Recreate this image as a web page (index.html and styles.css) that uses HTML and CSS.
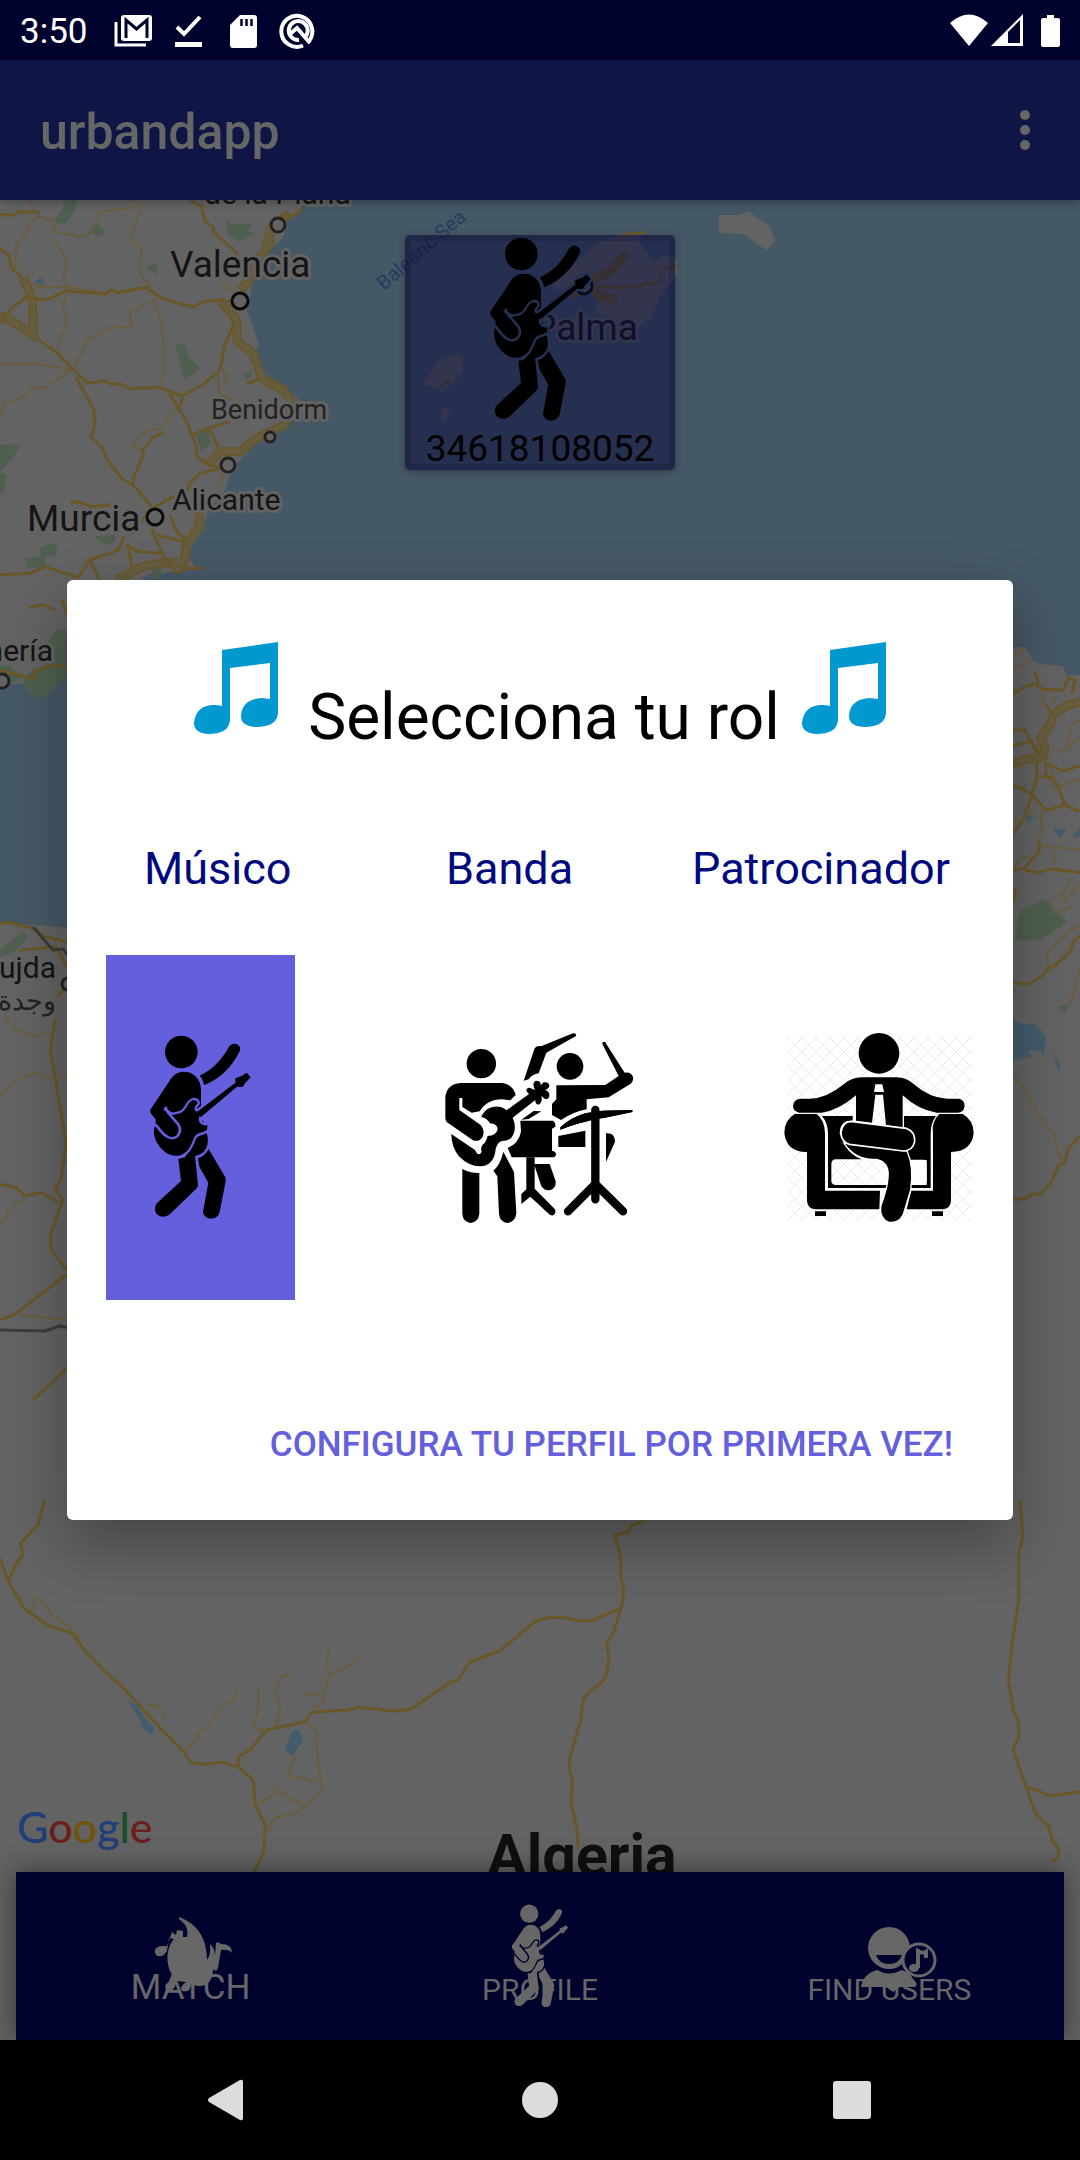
FILE: index.html
```html
<!DOCTYPE html>
<html lang="es">
<head>
<meta charset="utf-8">
<meta name="viewport" content="width=device-width, initial-scale=1">
<title>urbandapp</title>
<link rel="stylesheet" href="styles.css">
</head>
<body>
<svg class="sprite" aria-hidden="true">
  <symbol id="guitarist" viewBox="48 279 567 567">
    <g fill="currentColor">
      <circle cx="274" cy="336" r="49"/>
      <path d="M329 407C370 388 396 358 416 322Q424 308 439 312Q454 318 449 334C424 384 390 416 342 436Q340 418 329 407Z"/>
      <path d="M237 425C248 405 262 395 281 395C312 395 333 418 333 450V500L318 560L245 580L218 560L182 520Q179 514 182 508Z"/>
      <path d="M319 590L350 580C358 606 354 640 316 648L285 652Z"/>
      <path d="M265 657Q292 652 306 640L315 648L324 735Q324 742 318 747L240 822C222 838 192 830 195 802Q196 794 202 788L273 723Z"/>
      <path d="M324 655Q345 648 356 627L405 710Q409 716 407 724L389 816C382 843 343 842 339 815L355 728L328 680Z"/>
    </g>
    <path id="guitar" d="M197 553C189 570 191 588 200 607C220 640 243 650 265 647C300 640 304 607 314 590C324 574 345 580 352 567V556C342 557 332 554 328 546Q326 540 332 532L441 440L458 441L465 430L482 412L470 398L455 408L436 415V428L326 512C314 520 310 505 318 496C328 488 320 478 308 481C292 487 290 512 272 519Q258 524 245 525L225 512L197 530Z" fill="currentColor" stroke="var(--gap)" stroke-width="14" paint-order="stroke"/>
    <path d="M227 500Q228 512 236 520L264 552C277 571 266 597 243 594C226 592 216 577 196 553" fill="none" stroke="var(--gap)" stroke-width="8"/>
    <path d="M200 513L234 553L245 572" fill="none" stroke="currentColor" stroke-width="36" stroke-linecap="round" stroke-linejoin="round"/>
    <path d="M330 530Q328 548 345 553" fill="none" stroke="var(--gap)" stroke-width="7"/>
    <circle cx="338" cy="544" r="2" fill="currentColor"/>
  </symbol>
  <symbol id="notes" viewBox="0 0 84 92">
    <path fill="#0099cf" d="M28 8L84 0V70Q84 84 64 85Q47 85 47 74Q48 57 68 56L76 57V21L36 26V78Q35 92 14 92Q0 91 0 81Q2 62 22 63L28 64Z"/>
  </symbol>
</svg>

<header class="status">
  <span class="clock">3:50</span>
  <svg class="status-icons" viewBox="114 10 204 40" aria-hidden="true">
    <g fill="none" stroke="#fff" stroke-width="3"><path d="M116 21V44H146"/></g>
    <rect x="121" y="14" width="31" height="26" rx="3" fill="#fff"/>
    <path d="M126 37V19L136.500 28L147 19V37" fill="none" stroke="#00022e" stroke-width="3"/>
    <path d="M177 26L184 33L200 16" fill="none" stroke="#fff" stroke-width="4"/>
    <path d="M175 41H202V46H175Z" fill="#fff"/>
    <path d="M240 14H254Q257 14 257 17V44Q257 47 254 47H233Q230 47 230 44V24Z" fill="#fff"/>
    <path d="M241.500 18V25M246.500 18V25M251.500 18V25" stroke="#00022e" stroke-width="2.500"/>
    <g fill="none" stroke="#fff" stroke-width="4"><path d="M308 41A15.500 15.500 0 1 0 303 44.500"/><path d="M306 35A9.500 9.500 0 1 0 299 39"/><path d="M290 33L297 27L310 42"/></g>
  </svg>
  <svg class="signal-icons" viewBox="950 10 110 40" aria-hidden="true">
    <path fill="#fff" d="M969 45L950 22Q969 5 988 22ZM991 45L1023 13V45ZM1041 19Q1041 17 1043 17H1047V14H1054V17H1058Q1060 17 1060 19V44Q1060 46 1058 46H1043Q1041 46 1041 44Z"/>
    <path fill="#00022e" d="M1008 42V31L1020 19V42Z"/>
  </svg>
</header>

<div class="app">
  <div class="appbar">
    <h1>urbandapp</h1>
    <button class="more" aria-label="Más opciones"><span></span><span></span><span></span></button>
  </div>

  <main class="map">
    <svg class="map-canvas" viewBox="0 200 1080 1840" preserveAspectRatio="xMidYMin slice">
      <rect y="200" width="1080" height="1840" fill="#455865"/>
      <path fill="#636363" d="M0 200H303L300 212L288 220L283 238L262 258L252 285L247 310L259 345L254 352L268 378L288 391L304 404L285 425L270 437L255 445L238 462L230 475L225 490L208 510L203 530L192 545L189 558L195 567L203 569L150 574L110 600L90 655L70 671L52 690L44 697H34L22 683L0 686Z"/>
      <path fill="#636363" d="M0 922L70 928L400 800L1013 647H1024L1033 660L1040 664L1063 666L1067 675H1080V2040H0Z"/>
      <g fill="#636363" transform="translate(360 190) scale(.3333)">
        <path d="M1077 75H1136L1168 64L1190 83L1228 107L1246 152L1219 180L1148 131L1077 130Z"/>
        <path d="M575 284L640 225L710 160L780 132L855 126L832 150L850 172L880 217L915 192L951 212V250L930 282L900 320L872 385L835 412L760 385L710 370V325L700 300L650 290L630 335L620 300L585 300Z"/>
        <path d="M190 584L235 507L290 491L309 497V546L250 608L238 598ZM244 660L262 654L273 678L244 696Z"/>
      </g>
      <g fill="#4f5f4f" transform="translate(0 190) scale(.3333)">
        <path d="M195 32H228L230 55L200 98L180 102L160 90L182 70ZM285 95L318 124L298 140L270 128ZM680 90L705 104L755 98L745 125L770 130L715 155L680 128ZM438 230L472 220L470 255ZM524 465L555 462L566 500L600 535L555 570ZM724 552L760 542L745 572ZM585 735L620 715L634 758L605 785ZM0 765L65 763L40 800L0 845ZM76 1105L120 1100V1075L170 1056V1095L135 1098V1132H76ZM280 1040L345 1035L347 1055L318 1063ZM455 1140L485 1130L480 1165L455 1170ZM0 850H18L15 900L0 915Z"/>
        <path fill="#435c6b" d="M104 272L125 262L135 288Z"/>
      </g>
      <g fill="#4f5f4f" transform="translate(0 600) scale(.348 .51)">
        <path d="M201 60L165 58L140 80L130 130L95 135L65 160L95 190H125L201 140ZM0 130L30 128L60 155L25 165L0 150ZM0 685L70 650L78 665L40 690L0 700Z"/>
      </g>
      <g class="trunk" transform="translate(0 190) scale(.3333)">
        <path d="M870 70L810 115V160L785 195L755 225L750 270L720 300M665 335L710 390L712 455L760 490L785 565L850 600L880 640L855 705L770 745L720 785H660L625 825M0 375L55 405L110 445M70 262L98 330L100 430M600 950L598 1010L560 1060L552 1118H490L430 1130L350 1170"/>
      </g>
      <g class="trunk core" transform="translate(0 190) scale(.3333)">
        <path d="M870 70L810 115V160L785 195L755 225L750 270L720 300M665 335L710 390L712 455L760 490L785 565L850 600L880 640L855 705L770 745L720 785H660L625 825M0 375L55 405L110 445M70 262L98 330L100 430M600 950L598 1010L560 1060L552 1118H490L430 1130L350 1170"/>
      </g>
      <g class="road" transform="translate(0 190) scale(.3333)">
        <path d="M0 75H45L55 65L120 66M570 30L605 50L615 95L640 110V125L700 180L715 195M905 55L885 75L850 80M0 175L25 195L35 235L65 262M0 400L35 355L80 322L140 330L200 303L320 312L335 298L350 308L440 292L480 322L545 343L580 350L610 335L665 330L700 335M110 445L170 488L220 540L262 578H285L310 572L330 582H362L390 596L480 592L545 618L608 585L655 545L665 520L672 470L695 420L700 395M228 562L282 660L285 705L273 740L308 775L320 808L365 865L400 885L455 950M490 728L460 740L425 785L430 795L402 860L398 885M505 605L560 695L575 735L590 770V800L625 825L665 835M545 618V640L530 655M575 735L625 715L690 695M630 720L660 780M740 582L785 565M210 935L245 938L275 950L332 945M425 995L450 960L520 920L560 905L570 880L600 850L665 835M455 1015L495 1110M470 1035L555 1055M510 975L530 1025L560 1050M0 1155L90 1150L135 1130L235 1163L270 1110L355 1080L372 1040M270 1110L298 1170M383 1060L395 1130M383 1070L415 1085L490 1090M500 1110L530 1150L555 1135H610"/>
        <path class="minor" d="M90 32L105 65L120 80L85 95L80 130L50 160L45 240M120 80L155 95L165 125L240 140L270 130L290 90L305 65L415 50L425 32M420 55L410 90L390 145L425 175L418 250L450 290M160 145L200 210L190 270L200 310L190 345L200 400L170 480M0 525L100 520L215 540M215 540L140 590L95 595L65 625L15 638L0 680M225 530L262 450L325 415L395 410L390 365L475 325M465 335L485 400L495 525L478 590M100 280L120 292H210L300 305M655 545L657 610L700 630M665 530L680 560L675 590M530 655L510 680L480 715L435 725L395 770L425 780M600 950L660 880L670 835M660 270L700 305M800 120L780 190"/>
      </g>
      <g class="road" transform="translate(0 1500) scale(.6888 .3333)">
        <path d="M65 0L55 75L30 130L33 165L24 190L12 245L35 325L68 375L105 400L122 450L155 520L175 555L235 690L260 740L278 788L300 793L325 787L348 803L368 842L370 910L385 975L383 1055L369 1116M0 175L12 245M346 800V770L365 745L387 690L443 665L452 637L505 630L523 622L568 633L597 628L655 545L665 541L682 486L725 453L778 363L800 351L823 354L838 362H860L902 323M938 62L915 78L912 95L892 106L901 165V230L906 273L902 323L891 395L881 430L884 473L881 520L876 543L856 575L847 597L843 660L827 775V812L831 840L829 908L837 980L840 1060M1481 0L1485 113L1479 155V300L1470 425L1464 540L1471 630L1479 670V710L1471 750L1503 940L1522 978L1528 1020L1536 1045L1538 1070L1527 1086M1488 860L1502 868L1525 888L1568 875"/>
        <path class="minor" d="M45 335L54 292L68 320L75 345L98 377L122 425M265 760L285 720L290 695L300 683L320 625L340 600L345 572M375 563V630L368 680L382 693M420 525L407 530L398 575L406 615L402 680M478 450L473 500L480 525L470 570V605L455 630M526 465L515 490L480 525M442 592L448 577L470 590M445 665L458 692L465 845L470 865L435 935L398 955L382 1020M465 848L420 826L418 808L430 770M396 862L415 882L420 898L443 912M405 875L373 910M215 615L230 618L235 640L240 655"/>
      </g>
      <g class="road" transform="translate(0 600) scale(.348 .51)">
        <path d="M83 15L125 9L158 20M178 0L198 40M0 138L98 155L100 140L140 130L190 128M0 635L25 632L100 645L130 660L201 672M55 687L160 680L201 730M201 745L165 780M160 820L145 880L170 985L190 1065L175 1135L160 1155L180 1175L145 1245L147 1275L200 1320M0 1145L45 1152L70 1168L120 1162L165 1180M0 1412L45 1400L185 1325L201 1328M95 1568L165 1525L201 1500"/>
        <path class="minor" d="M10 815L50 845L110 855L145 845M0 970L45 945L105 925L140 938L201 933M0 1225L45 1185L70 1175M45 1400L160 1410H201"/>
      </g>
      <path class="border" d="M33 927L53 950L63 949L70 958M0 1330L45 1331L60 1326L70 1328"/>
      <g transform="translate(1000 600) scale(.3333 .51)">
        <path fill="#4f5f4f" d="M57 610L133 587L203 632L118 667L45 668ZM175 798L212 791L195 810ZM39 362L78 364L70 374L39 370ZM39 757L52 768L39 772Z"/>
        <path fill="#435c6b" d="M39 824L80 834L102 830L138 856L131 896L122 884H83L96 895L39 904ZM156 886L178 907V930ZM160 447L200 450L178 466ZM240 447L217 464H240ZM75 422L102 427L83 435Z"/>
      </g>
      <g class="trunk" transform="translate(1000 600) scale(.3333 .51)"><path d="M39 322L80 312L130 308L135 290L122 270L150 245L160 225L200 207L240 200"/></g>
      <g class="trunk core" transform="translate(1000 600) scale(.3333 .51)"><path d="M39 322L80 312L130 308L135 290L122 270L150 245L160 225L200 207L240 200"/></g>
      <g class="road" transform="translate(1000 600) scale(.3333 .51)">
        <path d="M39 185L75 170L105 165L130 175L190 177L205 152L225 158L215 185M105 140L115 165M39 255H75L110 300M39 285L95 278L120 300M138 205L155 225M110 315V345L95 385L70 430L39 458M135 320L140 345L170 360L195 402M135 320L190 335L240 325M110 345L165 348M39 362L95 380L138 413L195 402L240 415M120 475L118 490L75 525L39 530M75 530L115 535L150 527L240 535M39 595L46 565M39 750L85 754L130 735L145 720H160L210 690L220 670L240 658M240 1052L205 1075L195 1102L175 1110L155 1140L122 1165H92L85 1172L39 1176"/>
        <path class="minor" d="M39 138L100 120M39 110L60 100L75 93M125 175L130 200L145 215M170 180L160 205M240 235L215 245L200 275L205 290L170 300M200 290L240 270M155 335L165 370L240 350M125 410V450L110 480M39 440L100 412M110 480L240 490M39 530L60 505L120 500M160 490L165 520M240 555L195 590L185 580L215 545M150 590L165 615L220 600M240 635L190 660L140 690L145 715M240 720L230 750L210 790M39 935L75 960L115 1010L165 1050L172 1080L190 1102"/>
      </g>
      <g transform="translate(360 190) scale(.3333)">
        <g class="trunk"><path d="M695 270L750 245L800 190M700 295L720 320L770 328M680 300L630 310"/></g>
        <g class="road"><path d="M700 290L810 293L895 275L915 235L951 228M240 592L268 570M790 134L855 127"/></g>
      </g>
      <path fill="#435c6b" transform="translate(0 1500) scale(.6888 .3333)" d="M187 605L198 612L210 655L224 682L221 705L207 687L203 658ZM423 696L433 688L440 716L426 768L414 753Z"/>

      <g class="pins">
        <circle cx="278" cy="225" r="7"/><circle cx="270" cy="437" r="5"/><circle cx="228" cy="465" r="7"/><circle cx="2" cy="681" r="7"/><circle cx="68" cy="984" r="6"/>
        <circle class="major" cx="240" cy="301" r="8"/><circle class="major" cx="155" cy="517" r="8"/><circle class="major" cx="584" cy="286" r="8"/>
      </g>
      <g class="places">
        <text x="204" y="204" class="town">de la Plana</text>
        <text x="170" y="277" class="city">Valencia</text>
        <text x="211" y="419" class="village">Benidorm</text>
        <text x="172" y="510" class="town">Alicante</text>
        <text x="27" y="531" class="city">Murcia</text>
        <text x="533" y="340" class="city">Palma</text>
        <text x="53" y="661" class="town" text-anchor="end">Almería</text>
        <text x="56" y="978" class="town" text-anchor="end">Oujda</text>
        <text x="56" y="1010" class="village" text-anchor="end">وجدة</text>
        <text x="487" y="1876" class="country">Algeria</text>
        <text class="sea" transform="translate(384 291) rotate(-41)">Balearic Sea</text>
        <text x="17" y="1843" class="google"><tspan fill="#1f3f78">G</tspan><tspan fill="#6b1f1b">o</tspan><tspan fill="#6e5606">o</tspan><tspan fill="#1f3f78">g</tspan><tspan fill="#184f28">l</tspan><tspan fill="#6b1f1b">e</tspan></text>
      </g>
    </svg>

    <button class="marker">
      <svg class="marker-figure" aria-hidden="true"><use href="#guitarist"/></svg>
      <span>34618108052</span>
    </button>

    <nav class="tabs">
      <button class="tab tab-large">
        <span>MATCH</span>
        <svg viewBox="137 1903 106 106" aria-hidden="true"><path fill="currentColor" d="M178 1917C200 1925 206 1943 206 1960Q210 1955 209 1944Q214 1948 214 1956L215 1943Q216 1941 220 1944Q231 1944 231 1953Q228 1949 220 1950L217 1968Q215 1973 212 1969C212 1982 204 1990 190 1984Q190 1993 181 1991Q178 1987 185 1982L176 1981Q172 1995 165 1990Q162 1983 171 1981L172 1976C164 1965 165 1948 173 1939L168 1938L166 1951Q161 1959 155 1955Q151 1948 160 1946L166 1946L171 1932L175 1935L176 1930L182 1931L182 1937L186 1937C188 1928 184 1924 178 1919Z"/></svg>
      </button>
      <button class="tab">
        <span>PROFILE</span>
        <svg aria-hidden="true"><use href="#guitarist"/></svg>
      </button>
      <button class="tab">
        <span>FIND USERS</span>
        <svg viewBox="836 1903 106 106" aria-hidden="true">
          <circle cx="889" cy="1948" r="21" fill="currentColor"/><path fill="#00022e" d="M876 1955H902Q899 1964 889 1964Q879 1964 876 1955Z"/>
          <path fill="currentColor" d="M861 1987Q863 1974 877 1970Q889 1977 902 1970Q914 1974 916 1987H900L893 1992L886 1987Z"/>
          <circle cx="919" cy="1960" r="16" fill="#00022e" stroke="currentColor" stroke-width="3"/>
          <path d="M918 1968V1951Q923 1954 926 1952V1958" fill="none" stroke="currentColor" stroke-width="4"/><ellipse cx="914" cy="1968" rx="5" ry="4" fill="currentColor"/>
        </svg>
      </button>
    </nav>
  </main>

  <div class="overlay">
    <section class="dialog" role="dialog" aria-labelledby="dialog-title">
      <div class="heading">
        <svg aria-hidden="true"><use href="#notes"/></svg>
        <h2 id="dialog-title">Selecciona tu rol</h2>
        <svg aria-hidden="true"><use href="#notes"/></svg>
      </div>
      <div class="role-names">
        <span id="role-1">Músico</span>
        <span id="role-2">Banda</span>
        <span id="role-3">Patrocinador</span>
      </div>
      <div class="roles">
        <button class="role selected" aria-labelledby="role-1" aria-pressed="true"><svg aria-hidden="true"><use href="#guitarist"/></svg></button>
        <button class="role" aria-labelledby="role-2" aria-pressed="false">
          <svg viewBox="77 69 567 567" aria-hidden="true">
            <circle cx="183" cy="161" r="44"/><circle cx="449" cy="169" r="40"/>
            <path d="M343 115Q350 106 362 109L458 70Q470 70 467 78L378 128L355 190Q335 193 325 208L310 212ZM547 96Q555 93 558 102L613 188Q635 185 639 205Q638 216 630 222L565 262L499 268V298Q460 305 422 330L395 315V282L408 268V226L555 225L595 198L546 102Z"/>
            <path d="M420 352Q470 305 545 302L636 300V306L550 324Q480 335 420 359ZM414 378L495 362V411H414ZM557 370Q584 368 584 395L557 456ZM303 329L340 303L363 304L325 327ZM300 332H398Q407 338 405 350L395 356V422Q407 424 407 434Q405 442 395 442H274L262 414Q295 400 302 365Z"/>
            <path d="M318 442H343V536L404 598Q409 610 398 616Q390 617 385 611L330 560L303 582V552L318 538ZM341 462H388L406 514Q408 537 387 541Q369 542 362 526Z"/>
            <path d="M525 362V300" fill="none" stroke="#fff" stroke-width="44"/>
            <path d="M420 352Q470 305 545 302L636 300V306L550 324Q480 335 420 359Z"/>
            <path d="M525 300V568M525 522L443 604M525 522L608 604" fill="none" stroke="#000" stroke-width="25" stroke-linecap="round"/>
            <path d="M120 219H246Q278 224 286 255L270 271L245 268Q200 268 178 304L154 308L126 291V264H117V300L181 345Q195 360 187 380Q177 397 158 391L80 337Q75 333 75 320V260Q80 222 120 219Z"/>
            <path d="M93 372L164 420Q175 443 184 425Q178 410 193 399Q203 382 201 378Q228 378 232 357Q231 342 209 340Q200 324 182 320Q200 286 235 290Q248 290 258 301L326 252L318 243Q320 230 332 235L343 240L339 224Q341 210 352 213Q362 214 361 226L370 217Q386 215 387 227Q386 236 374 240Q388 244 387 257Q385 270 373 266L363 258Q368 278 354 284Q344 282 345 270L277 323Q292 357 273 383Q263 393 245 393Q227 398 225 425Q218 466 180 469Q145 469 115 438Q93 410 93 372Z"/>
            <path d="M126 477Q150 490 177 489V612Q174 636 151 639Q128 636 126 612ZM249 425L281 486L288 610Q285 636 262 639Q239 637 236 612L231 499L219 482Q240 465 249 425Z"/>
          </svg>
        </button>
        <button class="role" aria-labelledby="role-3" aria-pressed="false">
          <svg viewBox="75 69 567 567" aria-hidden="true">
            <defs><pattern id="hatch" width="42" height="42" patternUnits="userSpaceOnUse"><path d="M0 0L42 42M42 0L0 42" stroke="#ececec" stroke-width="3"/></pattern></defs>
            <rect x="83" y="76" width="552" height="555" fill="url(#hatch)"/>
            <circle cx="357" cy="130" r="61"/>
            <path d="M104 312H170Q194 330 195 370V542H360L358 598H166Q142 595 141 572V426Q80 427 73 370Q73 330 104 312ZM608 312H538Q514 335 519 370V542H454L440 598H548Q572 595 573 572V426Q635 425 641 370Q641 330 608 312ZM186 318H278V332Q240 330 239 370L258 410Q275 437 305 448H225Q214 450 214 462V514Q215 524 226 525H500V450H450L440 425L465 395Q468 360 432 352V318H528Q512 340 512 370V534H204V370Q204 340 186 318ZM165 604H198V618H165ZM516 604H549V618H516Z"/>
            <path d="M445 449H490Q500 450 500 460V514Q500 525 490 525H450Z" fill="#fff"/>
            <path d="M305 202H410Q438 202 458 220Q510 265 560 266H597Q614 270 614 288Q612 306 595 308H530Q475 300 428 256V353L378 346L369 254H346L336 338L288 332V256Q235 302 185 308H118Q100 305 99 288Q101 269 120 266H150Q200 265 252 222Q275 202 305 202Z"/>
            <path d="M346 223H367L372 246H342Z" fill="#fff"/>
            <path d="M256 402Q290 450 350 446Q392 455 386 505Q384 535 364 590Q360 625 388 635Q416 638 428 613L450 540Q460 470 440 425Z" stroke="#fff" stroke-width="8" paint-order="stroke"/>
            <path d="M272 334L438 355Q466 365 464 395Q458 423 430 423L268 403Q242 395 243 366Q249 335 272 334Z" stroke="#fff" stroke-width="5"/>
          </svg>
        </button>
      </div>
      <button class="confirm">CONFIGURA TU PERFIL POR PRIMERA VEZ!</button>
    </section>
  </div>
</div>

<footer class="system-nav">
  <button aria-label="Atrás"><svg viewBox="0 0 40 44"><path d="M32 2Q35 1 35 4V40Q35 43 32 42L1 24Q-1 22 1 20Z"/></svg></button>
  <button aria-label="Inicio"><svg viewBox="0 0 40 44"><circle cx="20" cy="22" r="18"/></svg></button>
  <button aria-label="Recientes"><svg viewBox="0 0 40 44"><rect x="1" y="3" width="38" height="38" rx="3"/></svg></button>
</footer>
</body>
</html>
```
FILE: styles.css
```css
* { box-sizing: border-box; }

body {
  margin: 0;
  min-height: 100vh;
  display: flex;
  flex-direction: column;
  font-family: Roboto, "Liberation Sans", sans-serif;
  background: #000;
}

button {
  border: 0;
  padding: 0;
  background: none;
  font: inherit;
  color: inherit;
}

svg { display: block; }

.sprite { position: absolute; width: 0; height: 0; }

/* system status bar */
.status {
  display: flex;
  align-items: center;
  height: 60px;
  padding: 2px 20px 0;
  background: #00022e;
  color: #fff;
  font-size: 35px;
}
.clock { width: 94px; }
.status-icons { width: 204px; height: 40px; }
.signal-icons { width: 110px; height: 40px; margin-left: auto; }

.app {
  position: relative;
  flex: 1;
  display: flex;
  flex-direction: column;
}

.appbar {
  position: relative;
  display: flex;
  align-items: center;
  justify-content: space-between;
  height: 140px;
  padding: 0 40px;
  background: #0f1545;
  color: #666;
  box-shadow: 0 2px 8px rgba(0, 0, 0, .3);
  z-index: 1;
}
.appbar h1 { margin: 0; padding-top: 4px; font-size: 50px; font-weight: 500; }
.more {
  display: flex;
  flex-direction: column;
  align-items: center;
  gap: 5px;
  width: 30px;
}
.more span { width: 10px; height: 10px; border-radius: 50%; background: #666; }

/* map */
.map {
  position: relative;
  flex: 1;
  display: flex;
  flex-direction: column;
  align-items: center;
  justify-content: space-between;
  padding: 35px 16px 0;
  overflow: hidden;
}
.map-canvas { position: absolute; inset: 0; width: 100%; height: 100%; }
.map-canvas path { vector-effect: non-scaling-stroke; }
.road, .trunk, .border { fill: none; stroke-linejoin: round; }
.road path { stroke: #6a5728; stroke-width: 3px; }
.road .minor { stroke: #6b5d3c; stroke-width: 2px; }
.trunk path { stroke: #6a5728; stroke-width: 9px; }
.core path { stroke: #665c3e; stroke-width: 6px; }
.border { stroke: #3c3c3c; stroke-width: 3px; }
.pins circle { fill: #636363; stroke: #222; stroke-width: 3px; }
.pins .major { stroke: #0a0a0a; }
.places text { fill: #141414; stroke: #636363; stroke-width: 6px; stroke-linejoin: round; paint-order: stroke; }
.places .city { font-size: 37px; }
.places .town { font-size: 30px; }
.places .village { font-size: 27px; fill: #222; }
.places .country { font-size: 59px; font-weight: 700; fill: #0f0f0f; }
.places .sea { font-size: 20px; fill: #283a5e; stroke: none; }
.places .google { font-family: Lato, sans-serif; font-size: 43px; font-weight: 500; stroke-width: 3px; }

.marker {
  --gap: #263050;
  position: relative;
  display: flex;
  flex-direction: column;
  align-items: center;
  width: 270px;
  height: 235px;
  border-radius: 5px;
  background: rgba(10, 12, 61, .53);
  box-shadow: inset 0 0 0 6px rgba(20, 20, 60, .25), 0 2px 6px rgba(0, 0, 0, .3);
  font-size: 37px;
  line-height: 50px;
  color: #000;
}
.marker-figure { width: 189px; height: 189px; flex: none; }

.tabs {
  --gap: #00022e;
  position: relative;
  display: grid;
  grid-template-columns: repeat(3, 1fr);
  width: 100%;
  height: 168px;
  background: #00022e;
  box-shadow: 0 0 24px rgba(0, 0, 0, .5);
  color: #676767;
  font-size: 30px;
  line-height: 40px;
}
.tab { display: grid; place-items: center; height: 168px; }
.tab > * { grid-area: 1 / 1; }
.tab span { align-self: end; padding-bottom: 30px; }
.tab svg { width: 106px; height: 106px; }
.tab-large { font-size: 35px; }
.tab-large span { padding-bottom: 32px; }

/* role dialog */
.overlay {
  position: absolute;
  inset: 0;
  display: grid;
  align-items: center;
  padding: 0 67px;
  z-index: 2;
}
.dialog {
  display: flex;
  flex-direction: column;
  padding: 62px 39px 30px;
  border-radius: 6px;
  background: #fff;
  box-shadow: 0 24px 60px rgba(0, 0, 0, .3);
}
.heading { display: flex; justify-content: center; }
.heading svg { width: 84px; height: 92px; }
.heading h2 {
  margin: 0;
  padding: 38px 22px 0 30px;
  font-size: 64px;
  font-weight: 400;
  line-height: 76px;
  color: #000;
}
.role-names {
  display: grid;
  grid-template-columns: 302fr 246fr 258fr;
  margin-top: 86px;
  padding: 0 24px 0 38px;
  font-size: 45px;
  line-height: 54px;
  color: #000a7c;
}
.roles {
  --gap: #645fdd;
  display: flex;
  justify-content: space-between;
  margin-top: 59px;
}
.role { display: grid; place-items: center; width: 189px; height: 345px; color: #000; }
.role svg { width: 189px; height: 189px; overflow: visible; }
.selected { background: #645fdd; }
.confirm {
  align-self: flex-end;
  height: 90px;
  margin-top: 99px;
  margin-bottom: 1px;
  padding: 0 21px;
  font-size: 35px;
  font-weight: 500;
  color: #645fdd;
}

/* system navigation */
.system-nav {
  display: flex;
  align-items: center;
  justify-content: center;
  gap: 272px;
  height: 120px;
}
.system-nav svg { width: 40px; height: 44px; fill: #dcdcdc; }
```
